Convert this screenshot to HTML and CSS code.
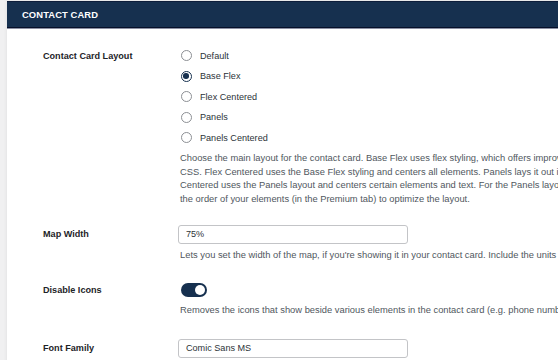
FILE: index.html
```html
<!DOCTYPE html>
<html lang="en">
<head>
  <meta charset="UTF-8">
  <meta name="viewport" content="width=device-width, initial-scale=1.0">
  <title>Contact Card Settings</title>
  <link rel="stylesheet" href="styles.css">
</head>
<body>

  <div class="panel">
    <!-- Cabecera -->
    <div class="panel-header">
      <h2>Contact Card</h2>
    </div>

    <div class="form">
      <!-- Layout -->
      <div class="row row-layout">
        <div class="label">Contact Card Layout</div>
        <div class="field">
          <label class="radio"><span class="circle"></span>Default</label>
          <label class="radio"><span class="circle checked"></span>Base Flex</label>
          <label class="radio"><span class="circle"></span>Flex Centered</label>
          <label class="radio"><span class="circle"></span>Panels</label>
          <label class="radio"><span class="circle"></span>Panels Centered</label>
          <p class="desc">
            <span>Choose the main layout for the contact card. Base Flex uses flex styling, which offers improved responsiveness and relies less on</span>
            <span>CSS. Flex Centered uses the Base Flex styling and centers all elements. Panels lays it out in separate panels, and Panels</span>
            <span>Centered uses the Panels layout and centers certain elements and text. For the Panels layouts, you may want to change</span>
            <span>the order of your elements (in the Premium tab) to optimize the layout.</span>
          </p>
        </div>
      </div>

      <!-- Map width -->
      <div class="row">
        <div class="label label-input">Map Width</div>
        <div class="field">
          <input class="text-input" type="text" value="75%">
          <p class="desc desc-input"><span>Lets you set the width of the map, if you're showing it in your contact card. Include the units (e.g. px, %).</span></p>
        </div>
      </div>

      <!-- Iconos -->
      <div class="row">
        <div class="label label-toggle">Disable Icons</div>
        <div class="field">
          <div class="toggle-wrap"><span class="toggle on"></span></div>
          <p class="desc"><span>Removes the icons that show beside various elements in the contact card (e.g. phone number, email).</span></p>
        </div>
      </div>

      <!-- Fuente -->
      <div class="row row-last">
        <div class="label label-input">Font Family</div>
        <div class="field">
          <input class="text-input" type="text" value="Comic Sans MS">
        </div>
      </div>
    </div>
  </div>

</body>
</html>
```

FILE: styles.css
```css
* {
  margin: 0;
  padding: 0;
  box-sizing: border-box;
}

html, body {
  width: 100%;
  height: 100%;
  overflow: hidden;
}

body {
  background: #f0f0f1;
  font-family: "Liberation Sans", Arial, sans-serif;
  font-size: 9.1px;
  color: #1d2327;
  padding-top: 1px;
  padding-left: 7px;
}

.panel {
  width: 900px;
  background: #ffffff;
  min-height: 400px;
  box-shadow: 0 0 4px rgba(0, 0, 0, 0.08);
}

.panel-header {
  height: 27px;
  background: #16304f;
  border-top: 1px solid #0d1d3a;
  border-bottom: 1px solid #06102a;
  box-shadow: 0 1px 0 #8a8fa3;
  display: flex;
  align-items: center;
  padding-left: 15px;
}

.panel-header h2 {
  color: #ffffff;
  font-size: 9.4px;
  font-weight: bold;
  text-transform: uppercase;
  letter-spacing: 0.1px;
}

.form {
  padding-left: 36px;
}

.row {
  display: grid;
  grid-template-columns: 135px 1fr;
  padding: 9px 0 9px 0;
}

.row-layout {
  padding-top: 17.5px;
}

.row-last {
  padding-top: 12px;
}

.label {
  font-weight: bold;
  line-height: 20.5px;
  color: #1d2327;
}

.label-input {
  line-height: 19px;
}

.label-toggle {
  line-height: 20px;
}

.radio {
  display: flex;
  align-items: center;
  height: 20.5px;
  color: #2c3338;
}

.circle {
  width: 11px;
  height: 11px;
  border: 1px solid #8c8f94;
  border-radius: 50%;
  margin-left: 2.5px;
  margin-right: 8.5px;
  display: flex;
  align-items: center;
  justify-content: center;
  background: #fff;
}

.circle.checked {
  border-color: #16304f;
}

.circle.checked::after {
  content: "";
  width: 5.6px;
  height: 5.6px;
  border-radius: 50%;
  background: #16304f;
}

.desc {
  color: #50575e;
  font-size: 9.35px;
  line-height: 13.65px;
  margin-top: 4px;
  margin-left: 2px;
}

.desc span {
  display: block;
  white-space: nowrap;
}

.desc-input {
  margin-top: 5px;
}

.text-input {
  display: block;
  width: 230px;
  height: 19px;
  border: 1px solid #c3c4c7;
  border-radius: 3px;
  padding: 0 7px;
  font-family: inherit;
  font-size: 9.1px;
  color: #2c3338;
  background: #fff;
  outline: none;
}

.toggle-wrap {
  height: 20px;
  display: flex;
  align-items: center;
}

.toggle {
  display: block;
  width: 26px;
  height: 14px;
  border-radius: 7px;
  background: #16304f;
  margin-left: 3px;
  position: relative;
}

.toggle.on::after {
  content: "";
  position: absolute;
  top: 2px;
  right: 2px;
  width: 10px;
  height: 10px;
  border-radius: 50%;
  background: #ffffff;
}
```
